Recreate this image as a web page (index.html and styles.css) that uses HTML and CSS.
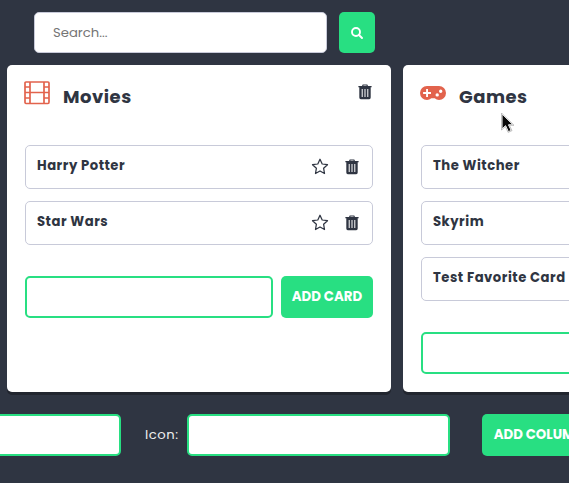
FILE: index.html
```
<!DOCTYPE html>
<html lang="en">
<head>
<meta charset="utf-8">
<title>Board</title>
<link rel="stylesheet" href="styles.css">
</head>
<body>
<svg class="sprite" aria-hidden="true">
  <symbol id="trash" viewBox="0 0 14 16">
    <path fill-rule="evenodd" d="M4.2 2V1.4Q4.2.5 5.1.5H8.9Q9.8.5 9.8 1.4V2H13.2Q13.7 2 13.7 2.5V3.3H12.7V13.5Q12.7 15.2 11.2 15.2H2.8Q1.3 15.2 1.3 13.5V3.3H.3V2.5Q.3 2 .8 2ZM5.4 2H8.6V1.5H5.4ZM3.7 5V13.1H4.7V5ZM6.5 5V13.1H7.5V5ZM9.3 5V13.1H10.3V5Z"/>
  </symbol>
  <symbol id="star" viewBox="0 0 18 17">
    <path d="M9 1.2L11.200 6L16.500 6.700L12.600 10.200L13.500 15.500L9 13L4.500 15.500L5.400 10.200L1.500 6.700L6.800 6Z" fill="none" stroke="currentColor" stroke-width="1.25" stroke-linejoin="round"/>
  </symbol>
</svg>
<form class="search">
  <input class="search-input" type="text" placeholder="Search...">
  <button class="search-button" type="button" aria-label="Search">
    <svg viewBox="0 0 12 12" width="12" height="12"><circle cx="5" cy="5" r="4"/><path d="M8 8L11 11"/></svg>
  </button>
</form>
<main class="columns">
  <section class="column">
    <header class="column-head">
      <svg class="column-icon" viewBox="0 0 26 24" width="26" height="24"><path d="M2 1H24Q25 1 25 2V21Q25 22.500 24 22.500H2Q1 22.500 1 21V2Q1 1 2 1ZM6 1V22.500M20 1V22.500M6 11.500H20M1 6H6M1 11.500H6M1 17H6M20 6H25M20 11.500H25M20 17H25" fill="none" stroke="currentColor" stroke-width="1.7"/></svg>
      <h2>Movies</h2>
      <svg class="column-trash"><use href="#trash"/></svg>
    </header>
    <ul class="cards">
      <li><span>Harry Potter</span><svg class="star"><use href="#star"/></svg><svg class="trash"><use href="#trash"/></svg></li>
      <li><span>Star Wars</span><svg class="star"><use href="#star"/></svg><svg class="trash"><use href="#trash"/></svg></li>
    </ul>
    <form class="card-form"><input type="text" aria-label="Card title"><button class="button" type="button">ADD CARD</button></form>
  </section>
  <section class="column">
    <header class="column-head">
      <svg class="column-icon" viewBox="0 0 26 24" width="26" height="24"><path fill="currentColor" fill-rule="evenodd" d="M7 5H19A7 7 0 0 1 19 19Q16.500 19 14.700 17.200H11.300Q9.500 19 7 19A7 7 0 0 1 7 5ZM6.100 8V11H3.100V12.900H6.100V15.900H8V12.900H11V11H8V8ZM17.200 12.200A1.700 1.700 0 1 0 17.200 15.600A1.700 1.700 0 1 0 17.200 12.200ZM20.700 8.500A1.700 1.700 0 1 0 20.700 11.900A1.700 1.700 0 1 0 20.700 8.500Z"/></svg>
      <h2>Games</h2>
    </header>
    <ul class="cards">
      <li><span>The Witcher</span></li>
      <li><span>Skyrim</span></li>
      <li><span>Test Favorite Card</span></li>
    </ul>
    <form class="card-form"><input type="text" aria-label="Card title"></form>
  </section>
</main>
<form class="column-form">
  <input type="text" aria-label="Title">
  <label for="icon">Icon:</label>
  <input id="icon" type="text">
  <button class="button wide" type="button">ADD COLUMN</button>
</form>
<svg class="cursor" viewBox="0 0 14 20" width="14" height="20"><path d="M1 1V16L4.600 12.700L7.400 18.700L10.200 17.400L7.500 11.800H12Z" fill="#080808" stroke="#fff" stroke-width="1"/><path d="M.5 0V17L4.400 13.600L7.100 19.400L11 17.600L8.300 12.300H13Z" fill="none" stroke="#999" stroke-width=".6"/></svg>
</body>
</html>
```
FILE: styles.css
```
* {
  box-sizing: border-box;
}

body {
  margin: 0;
  height: 483px;
  overflow: hidden;
  background: #2f3542;
  color: #2f3542;
  font-family: Poppins, Inter, "Open Sans", sans-serif;
}

.sprite {
  position: absolute;
  width: 0;
  height: 0;
}

input,
button {
  font: inherit;
}

.search {
  display: flex;
  gap: 12px;
  padding: 12px 0 0 34px;
}

.search-input {
  width: 293px;
  height: 41px;
  padding: 0 18px;
  border: 1px solid #c8cad9;
  border-radius: 5px;
  background: #fff;
  font-size: 13.2px;
}

.search-input::placeholder {
  color: #757575;
}

.search-button {
  display: flex;
  align-items: center;
  justify-content: center;
  width: 36px;
  height: 41px;
  padding: 0;
  border: 0;
  border-radius: 5px;
  background: #28df82;
}

.search-button svg {
  fill: none;
  stroke: #fff;
  stroke-width: 1.9;
  stroke-linecap: round;
}

.columns {
  display: flex;
  gap: 12px;
  width: 780px;
  height: 327px;
  margin: 12px 0 0 7px;
}

.column {
  flex: none;
  width: 384px;
  padding: 16px 18px 0;
  border-radius: 5px;
  background: #fff;
  box-shadow: 0 3px 0 #22262f;
}

.column-head {
  display: flex;
  height: 64px;
}

.column-icon {
  flex: none;
  margin: 0 11.6px 0 -.6px;
  color: #e2634d;
}

h2 {
  flex: 1;
  margin: 2px 0 0 1px;
  font-size: 18px;
  line-height: 28px;
  font-weight: 700;
  letter-spacing: .5px;
}

.column-trash {
  width: 14px;
  height: 16px;
  margin: 3px 1px 0 0;
  fill: #2f3542;
}

.cards {
  display: grid;
  gap: 12px;
  margin: 0;
  padding: 0;
  list-style: none;
}

.cards li {
  display: flex;
  align-items: center;
  height: 44px;
  padding: 0 13px 0 11px;
  border: 1px solid #c8cad9;
  border-radius: 5px;
  font-size: 13.2px;
  line-height: 20px;
  font-weight: 700;
  letter-spacing: .5px;
}

.cards span {
  flex: 1;
  margin-top: -2px;
  white-space: nowrap;
}

.cards svg {
  margin-top: -1px;
}

.cards .star {
  width: 18px;
  height: 17px;
  margin-right: 16px;
}

.trash {
  width: 14px;
  height: 16px;
  fill: #2f3542;
}

.card-form {
  display: flex;
  gap: 8px;
  margin-top: 31px;
}

.card-form input,
.column-form input {
  flex: none;
  width: 248px;
  height: 42px;
  border: 2px solid #28df82;
  border-radius: 5px;
  background: #fff;
}

.button {
  flex: none;
  width: 92px;
  height: 42px;
  padding: 0 0 1px;
  border: 0;
  border-radius: 5px;
  background: #28df82;
  color: #fff;
  font-size: 13.33px;
  font-weight: 700;
  white-space: nowrap;
}

.column-form {
  display: flex;
  align-items: center;
  width: 780px;
  margin: 22px 0 0 -142px;
}

.column-form input {
  width: 263px;
}

.column-form label {
  width: 42px;
  margin-left: 24px;
  color: #eee;
  font-size: 13.2px;
  letter-spacing: .5px;
}

.column-form .wide {
  width: 114px;
  margin-left: 32px;
}

.cursor {
  position: absolute;
  left: 501px;
  top: 113px;
}
```
